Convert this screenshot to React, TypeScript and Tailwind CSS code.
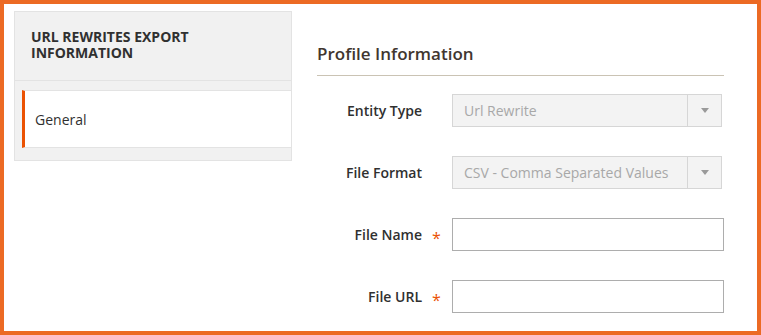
import React from "react";

function Arrow() {
  return (
    <svg width="8" height="5" viewBox="0 0 8 5" className="block">
      <path d="M0 0 H8 L4 5 Z" fill="#9a9a9a" />
    </svg>
  );
}

function SelectBox({ value }: { value: string }) {
  return (
    <div className="w-[270px] h-[33px] flex border border-[#d6d6d6] bg-[#f3f3f3]">
      <div className="flex-1 flex items-center pl-[11px] text-[14px] text-[#a8a8a8] whitespace-nowrap">
        {value}
      </div>
      <div className="w-[34px] border-l border-[#d6d6d6] flex items-center justify-center">
        <Arrow />
      </div>
    </div>
  );
}

function Row({
  label,
  required,
  children,
}: {
  label: string;
  required?: boolean;
  children: React.ReactNode;
}) {
  return (
    <div className="flex items-center">
      <div className="relative w-[135px] pr-[30px] text-right text-[14px] leading-[20px] font-semibold text-[#303030]">
        {label}
        {required && (
          <span className="absolute left-[115px] top-[3px] text-[16px] leading-[20px] font-normal text-[#eb5202]">
            *
          </span>
        )}
      </div>
      {children}
    </div>
  );
}

export default function App() {
  return (
    <div className="w-[761px] h-[335px] border-4 border-[#ec6a24] bg-white font-['Open_Sans',sans-serif] flex items-start pl-[10px] pt-[7px]">
      <aside className="w-[278px] shrink-0 bg-[#f1f1f1] border border-[#e3e3e3] pb-[12px]">
        <div className="border-b border-[#e3e3e3] pl-[16px] pr-4 pt-[17px] pb-[19px] text-[14px] leading-[16px] font-bold text-[#303030] uppercase">
          URL Rewrites Export
          <br />
          Information
        </div>
        <div className="mt-[9px] ml-[7px] bg-white border-y border-[#e3e3e3] border-l-[3px] border-l-[#eb5202] h-[58px] flex items-center pl-[10px] text-[14px] text-[#303030]">
          General
        </div>
      </aside>
      <main className="ml-[25px] w-[407px] pt-[33px]">
        <h2 className="text-[17px] leading-[20px] font-semibold text-[#41362f] pb-[11px] border-b border-[#cac3b4]">
          Profile Information
        </h2>
        <div className="mt-[18px] flex flex-col gap-[29px]">
          <Row label="Entity Type">
            <SelectBox value="Url Rewrite" />
          </Row>
          <Row label="File Format">
            <SelectBox value="CSV - Comma Separated Values" />
          </Row>
          <Row label="File Name" required>
            <input className="w-[272px] h-[33px] border border-[#adadad] bg-white outline-none" />
          </Row>
          <Row label="File URL" required>
            <input className="w-[272px] h-[33px] border border-[#adadad] bg-white outline-none" />
          </Row>
        </div>
      </main>
    </div>
  );
}
